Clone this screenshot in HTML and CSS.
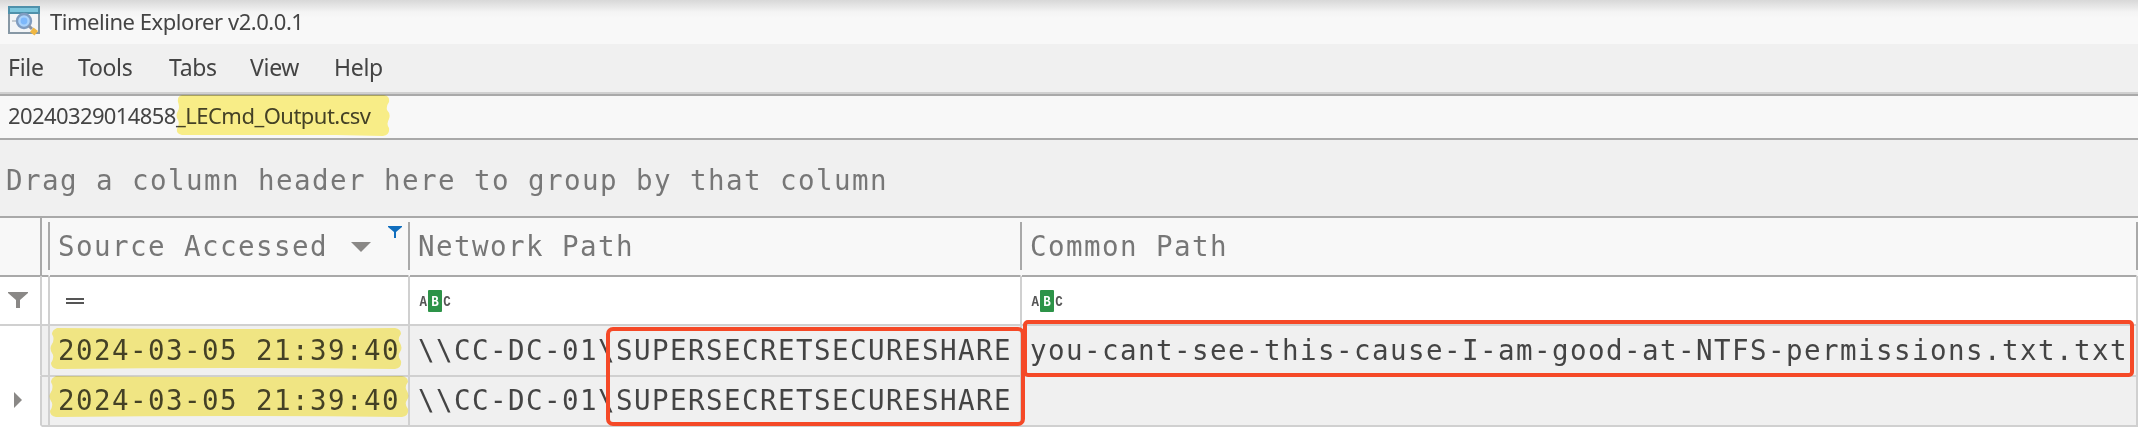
FILE: index.html
```html
<!DOCTYPE html>
<html lang="en">
<head>
<meta charset="utf-8">
<title>Timeline Explorer v2.0.0.1</title>
<link rel="stylesheet" href="styles.css">
</head>
<body>
<div class="window">
  <header class="titlebar">
    <svg class="app-icon" width="32" height="30" viewBox="0 0 32 30">
      <rect x="1" y="1" width="30" height="26" fill="#f3f5f7" stroke="#8798a5" stroke-width="2"/>
      <rect x="0" y="0" width="32" height="8" fill="#4f91ab"/>
      <rect x="2" y="2" width="28" height="4" fill="#7cc6dd"/>
      <rect x="4" y="14" width="6" height="2" fill="#c5ccd2"/>
      <circle cx="16" cy="15" r="7" fill="#a9d2fb" stroke="#7f9cc0" stroke-width="2.4"/>
      <circle cx="16" cy="15" r="3.4" fill="#7db8fb"/>
      <path d="M21 20l3 3" stroke="#8b93a0" stroke-width="3"/>
      <path d="M25.500 21.500l4.500 3.500-3.500 4.500-4.500-3.500z" fill="#efb743"/>
    </svg>
    <span class="title">Timeline Explorer v2.0.0.1</span>
  </header>
  <nav class="menubar">
    <span class="menu m-file">File</span>
    <span class="menu m-tools">Tools</span>
    <span class="menu m-tabs">Tabs</span>
    <span class="menu m-view">View</span>
    <span class="menu m-help">Help</span>
  </nav>
  <div class="tabstrip">
    <span class="tab-stamp">20240329014858</span><span class="tab-name">_LECmd_Output.csv</span>
    <svg class="marker marker-tab" width="216" height="44" viewBox="0 0 216 44">
      <path d="M6 1H208q6 1 5 7q-3 4-2 8q4 4 2 9q-3 5 0 9q1 7-6 8L160 41H6q-6-1-5-6q3-5 1-9q-3-5 0-9q2-4 0-9q-1-6 4-7z"/>
    </svg>
  </div>
  <div class="grouppanel">Drag a column header here to group by that column</div>
  <div class="grid">
    <div class="row head">
      <div class="c0"></div><div class="c1"></div>
      <div class="c2">Source Accessed
        <svg class="sort" width="20" height="10" viewBox="0 0 20 10"><path d="M0 0h20L10 10z" fill="#8a8886"/></svg>
        <svg class="active-filter" width="14" height="12" viewBox="0 0 14 12"><path d="M0 0h14v1L8 6v6H6V6L0 1z" fill="#106ebe"/></svg>
      </div>
      <div class="c3">Network Path</div>
      <div class="c4">Common Path</div>
    </div>
    <div class="row filter">
      <div class="c0"><svg class="funnel" width="20" height="16" viewBox="0 0 20 16"><path d="M0 0h20v1L12 8v8H8V8L0 1z" fill="#8a8886"/></svg></div>
      <div class="c1"></div>
      <div class="c2"><svg class="equals" width="18" height="6" viewBox="0 0 18 6"><path d="M0 0h18v2H0zM0 4h18v2H0z" fill="#555"/></svg></div>
      <div class="c3"><svg class="abc" width="36" height="22" viewBox="0 0 36 22"><rect x="8" width="14" height="22" rx="1" fill="#2d9348"/><text x="-0.500" y="16" textLength="7.500" lengthAdjust="spacingAndGlyphs">A</text><text class="on" x="11.200" y="16" textLength="7.500" lengthAdjust="spacingAndGlyphs">B</text><text x="23.200" y="16" textLength="7.500" lengthAdjust="spacingAndGlyphs">C</text></svg></div>
      <div class="c4"><svg class="abc" width="36" height="22" viewBox="0 0 36 22"><rect x="8" width="14" height="22" rx="1" fill="#2d9348"/><text x="-0.500" y="16" textLength="7.500" lengthAdjust="spacingAndGlyphs">A</text><text class="on" x="11.200" y="16" textLength="7.500" lengthAdjust="spacingAndGlyphs">B</text><text x="23.200" y="16" textLength="7.500" lengthAdjust="spacingAndGlyphs">C</text></svg></div>
    </div>
    <div class="row data first">
      <div class="c0"></div><div class="c1"></div>
      <div class="c2">2024-03-05 21:39:40
        <svg class="marker marker-a" width="354" height="44" viewBox="0 0 354 44">
          <path d="M7 1Q180 3 345 1q6 1 6 6q-4 5-1 9q3 5 0 9q-3 4 1 9q1 7-6 8Q180 40 7 42q-6-1-6-6q4-6 1-10q-3-5 0-9q3-5 0-10q0-4 5-6z"/>
        </svg>
      </div>
      <div class="c3">\\CC-DC-01\SUPERSECRETSECURESHARE</div>
      <div class="c4">you-cant-see-this-cause-I-am-good-at-NTFS-permissions.txt.txt</div>
    </div>
    <div class="row data second">
      <div class="c0"><svg class="current" width="8" height="16" viewBox="0 0 8 16"><path d="M0 0l8 8-8 8z" fill="#8a8886"/></svg></div>
      <div class="c1"></div>
      <div class="c2">2024-03-05 21:39:40
        <svg class="marker marker-b" width="362" height="44" viewBox="0 0 362 44">
          <path d="M7 1Q180 3 353 1q6 1 6 6q-4 5-1 9q3 5 0 9q-3 4 1 9q1 7-6 8Q180 40 7 42q-6-1-6-6q4-6 1-10q-3-5 0-9q3-5 0-10q0-4 5-6z"/>
        </svg>
      </div>
      <div class="c3">\\CC-DC-01\SUPERSECRETSECURESHARE</div>
      <div class="c4"></div>
    </div>
    <div class="callout callout-share"></div>
    <div class="callout callout-file"></div>
  </div>
</div>
</body>
</html>
```
FILE: styles.css
```css
* { box-sizing: border-box; }
body { margin: 0; background: #fff; overflow: hidden; }
.window { width: 2138px; height: 428px; font-family: "Noto Sans", sans-serif; color: #444; white-space: nowrap; }
.titlebar { height: 44px; padding: 6px 0 0 8px; display: flex; gap: 10px; background: linear-gradient(#d8d8d8, #e8e8e8 7px, #f4f4f4 12px, #f8f8f8 18px); }
.title { font-size: 22px; line-height: 31px; letter-spacing: -0.46px; }
.menubar { height: 52px; display: flex; background: #f0f0f0; border-bottom: 2px solid #a9a9a9; box-shadow: inset 0 -2px #d0d0d0; font-size: 23px; letter-spacing: -0.3px; line-height: 46px; padding-left: 8px; }
.m-file { width: 70px; }
.m-tools { width: 91px; }
.m-tabs { width: 81px; }
.m-view { width: 84px; }
.tabstrip { position: relative; height: 44px; padding-left: 8px; background: #f8f8f8; border-bottom: 2px solid #a9a9a9; font-size: 22px; line-height: 39px; display: flex; }
.tab-stamp { width: 168px; letter-spacing: -0.6px; }
.tab-name { letter-spacing: -0.52px; }
.marker { position: absolute; fill: #fff48b; mix-blend-mode: multiply; }
.marker-tab { left: 176px; top: -2px; }
.grouppanel, .grid { font-family: "DejaVu Sans Mono", monospace; font-size: 27.5px; letter-spacing: 1.444px; }
.grouppanel { height: 78px; padding-left: 6px; background: #f0f0f0; border-bottom: 2px solid #a9a9a9; color: #777; line-height: 80px; }
.grid { position: relative; }
.row { display: grid; grid-template-columns: 42px 8px 360px 612px 1116px; }
.row > div { border-right: 2px solid #d0d0d0; border-bottom: 2px solid #d0d0d0; position: relative; }
.c2 { padding-left: 8px; }
.c3 { padding-left: 8px; }
.c4 { padding-left: 8px; }
.head { height: 58px; background: #f8f8f8; color: #777; line-height: 57px; }
.head > div { border-right-color: transparent; border-bottom-color: #a9a9a9; }
.head > .c0 { border-right-color: #a9a9a9; }
.head > div:not(.c0)::after { content: ""; position: absolute; right: -2px; top: 4px; width: 2px; height: 48px; background: #a9a9a9; }
.sort { position: absolute; left: 301px; top: 24px; }
.active-filter { position: absolute; right: 6px; top: 8px; }
.filter { height: 50px; line-height: 0; background: #fff; }
.funnel { margin: 16px 0 0 8px; }
.equals { margin: 22px 0 0 8px; }
.abc { margin: 14px 0 0 2px; overflow: visible; }
.abc text { font: bold 15px "Liberation Mono", monospace; fill: #555; letter-spacing: 0; }
.abc .on { fill: #fff; }
.data { height: 50px; line-height: 49px; background: #f0f0f0; }
.data > .c0 { background: #fff; }
.first > .c0 { border-bottom-color: #fff; }
.second > .c0 { border-bottom-color: #fff; }
.current { position: absolute; left: 14px; top: 16px; }
.marker-a { left: 0; top: 1px; }
.marker-b { left: -1px; top: -1px; }
.callout { position: absolute; border: 4px solid #f54927; }
.callout-share { left: 606px; top: 109px; width: 419px; height: 99px; border-radius: 7px; }
.callout-file { left: 1023px; top: 102px; width: 1111px; height: 57px; border-radius: 5px; }
```
